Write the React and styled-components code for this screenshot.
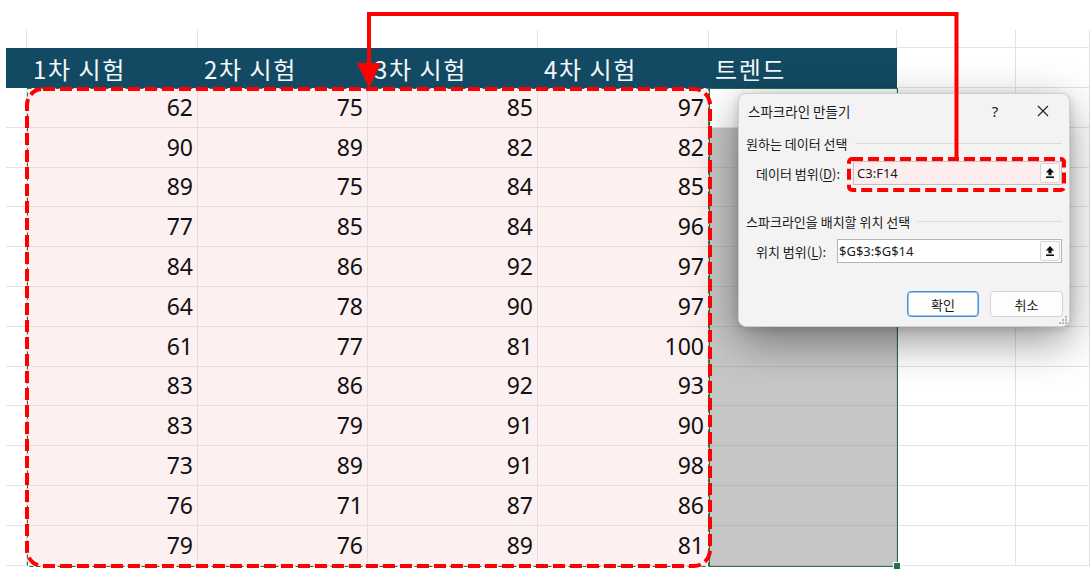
import React from 'react';
import styled, { createGlobalStyle } from 'styled-components';

const GlobalStyle = createGlobalStyle`
  html, body { margin: 0; padding: 0; background: #ffffff; }
  body { font-family: "Noto Sans", "Noto Sans CJK KR", sans-serif; }
  * { box-sizing: border-box; }
`;

const Stage = styled.div`
  position: relative;
  width: 1090px;
  height: 578px;
  overflow: hidden;
  background: #ffffff;
`;

const Sheet = styled.div`
  display: grid;
  grid-template-columns: 21px 171px 170px 170px 171px 188px 119px 74px;
  grid-template-rows: 18px 40px repeat(12, 39.8px);
  padding: 30px 0 0 6px;
`;

const TopCell = styled.div`
  border-right: 1px solid #e3e3e3;
  border-bottom: ${(p) => (p.$lined ? '1px solid #e3e3e3' : 'none')};
`;

const HeadCell = styled.div`
  display: flex;
  align-items: center;
  padding-left: 6px;
  background: ${(p) => (p.$band ? '#134a63' : '#ffffff')};
  border-right: ${(p) => (p.$band ? 'none' : '1px solid #e3e3e3')};
  border-bottom: ${(p) => (p.$band ? 'none' : '1px solid #e3e3e3')};
  color: #f4f7f9;
  font-family: "Noto Sans CJK KR", "Noto Sans", sans-serif;
  font-size: 24px;
  letter-spacing: 1.6px;
  white-space: nowrap;
`;

const tones = {
  white: { bg: '#ffffff', line: '#e3e3e3' },
  pink: { bg: '#fdf0f0', line: '#e6dcdc' },
  gray: { bg: '#c6c6c6', line: '#b7b7b7' },
  active: { bg: '#ffffff', line: '#e3e3e3' },
};

const DataCell = styled.div`
  display: flex;
  align-items: center;
  justify-content: flex-end;
  padding-right: 4px;
  background: ${(p) => tones[p.$tone].bg};
  border-right: 1px solid ${(p) => tones[p.$tone].line};
  border-bottom: 1px solid ${(p) => tones[p.$tone].line};
  color: #111111;
  font-family: "Noto Sans", sans-serif;
  font-size: 23px;
  line-height: 1;
`;

const Selection = styled.div`
  position: absolute;
  left: 709px;
  top: 88px;
  width: 189px;
  height: 479px;
  border: 1.5px solid #217346;
  pointer-events: none;
  &::after {
    content: '';
    position: absolute;
    right: -4px;
    bottom: -4px;
    width: 6px;
    height: 6px;
    background: #217346;
    border: 1px solid #ffffff;
  }
`;

const Marks = styled.svg`
  position: absolute;
  left: 0;
  top: 0;
  pointer-events: none;
`;

const Dialog = styled.div`
  position: absolute;
  left: 738px;
  top: 93px;
  width: 332px;
  height: 234px;
  background: #f3f3f3;
  border: 1px solid #cfcfcf;
  border-radius: 8px;
  box-shadow: 0 14px 44px rgba(0, 0, 0, 0.42), 0 2px 8px rgba(0, 0, 0, 0.14);
  font-family: "Noto Sans CJK KR", "Noto Sans", sans-serif;
  font-size: 13px;
  color: #1b1b1b;
  display: flex;
  flex-direction: column;
`;

const TitleBar = styled.div`
  height: 33px;
  display: flex;
  align-items: center;
  padding: 0 3px 0 9px;
  gap: 2px;
`;

const Title = styled.div`
  flex: 1;
  font-size: 13.5px;
`;

const TitleButton = styled.div`
  width: 46px;
  height: 30px;
  display: flex;
  align-items: center;
  justify-content: center;
  font-family: "Noto Sans", sans-serif;
  font-size: 15px;
  color: #222;
`;

const Section = styled.div`
  display: flex;
  align-items: center;
  gap: 7px;
  height: 18px;
  margin-top: ${(p) => p.$top}px;
  padding: 0 7px 0 7px;
  &::after {
    content: '';
    flex: 1;
    height: 1px;
    background: #dcdcdc;
  }
`;

const FieldRow = styled.div`
  display: flex;
  align-items: center;
  height: 24px;
  margin-top: 9px;
  padding: 0 7px 0 17px;
`;

const FieldLabel = styled.div`
  width: ${(p) => p.$w}px;
  flex: none;
  white-space: nowrap;
  u { text-underline-offset: 2px; }
`;

const RangeInput = styled.div`
  flex: 1;
  height: 24px;
  display: flex;
  align-items: center;
  padding-left: ${(p) => (p.$tint ? 3 : 1)}px;
  background: ${(p) => (p.$tint ? '#fdeeee' : '#ffffff')};
  border: 1px solid ${(p) => (p.$tint ? '#c9bcbc' : '#b4b4b4')};
  font-family: "Noto Sans", sans-serif;
  font-size: 13px;
  color: #1a1a1a;
`;

const InputText = styled.span`
  flex: 1;
`;

const CollapseButton = styled.div`
  width: 20px;
  height: 20px;
  margin-right: 1px;
  display: flex;
  align-items: center;
  justify-content: center;
  background: #fbfbfb;
  border: 1px solid #d6d6d6;
  border-radius: 2px;
`;

const ButtonRow = styled.div`
  display: flex;
  justify-content: flex-end;
  gap: 11px;
  margin-top: 28px;
  padding-right: 6px;
`;

const DialogButton = styled.div`
  width: ${(p) => p.$w}px;
  height: 26px;
  display: flex;
  align-items: center;
  justify-content: center;
  background: #fdfdfd;
  border: 1px solid ${(p) => (p.$primary ? '#4a8fd4' : '#d2d2d2')};
  box-shadow: ${(p) => (p.$primary ? 'inset 0 0 0 1px #9cc3ea' : 'none')};
  border-radius: 4px;
  font-size: 13px;
  color: #1b1b1b;
`;

const Grip = styled.svg`
  position: absolute;
  right: 2px;
  bottom: 2px;
`;

const rows = [
  [62, 75, 85, 97],
  [90, 89, 82, 82],
  [89, 75, 84, 85],
  [77, 85, 84, 96],
  [84, 86, 92, 97],
  [64, 78, 90, 97],
  [61, 77, 81, 100],
  [83, 86, 92, 93],
  [83, 79, 91, 90],
  [73, 89, 91, 98],
  [76, 71, 87, 86],
  [79, 76, 89, 81],
];

const headers = ['', '1차 시험', '2차 시험', '3차 시험', '4차 시험', '트렌드'];

const CollapseIcon = () => (
  <svg width="10" height="12" viewBox="0 0 10 12">
    <path d="M5 1 L9.2 5.4 H6.6 V8.2 H3.4 V5.4 H0.8 Z" fill="#111" />
    <rect x="1" y="9.4" width="8" height="1.6" fill="#111" />
  </svg>
);

export default function App() {
  return (
    <Stage>
      <GlobalStyle />
      <Sheet>
        {Array.from({ length: 8 }).map((_, i) => (
          <TopCell key={`t${i}`} $lined={i >= 6} />
        ))}
        {headers.map((h, i) => (
          <HeadCell key={`h${i}`} $band>
            {h}
          </HeadCell>
        ))}
        <HeadCell />
        <HeadCell />
        {rows.map((r, ri) => (
          <React.Fragment key={`r${ri}`}>
            <DataCell $tone="white" />
            {r.map((v, ci) => (
              <DataCell key={ci} $tone="pink">
                {v}
              </DataCell>
            ))}
            <DataCell $tone={ri === 0 ? 'active' : 'gray'} />
            <DataCell $tone="white" />
            <DataCell $tone="white" />
          </React.Fragment>
        ))}
      </Sheet>

      <Marks width="1090" height="578">
        <rect
          x="27.5"
          y="88.5"
          width="681"
          height="478"
          fill="none"
          stroke="#217346"
          strokeWidth="1"
          strokeDasharray="4 3"
        />
      </Marks>
      <Selection />

      <Dialog>
        <TitleBar>
          <Title>스파크라인 만들기</Title>
          <TitleButton>?</TitleButton>
          <TitleButton>
            <svg width="12" height="12" viewBox="0 0 12 12">
              <path d="M1 1 L11 11 M11 1 L1 11" stroke="#222" strokeWidth="1.1" />
            </svg>
          </TitleButton>
        </TitleBar>
        <Section $top={7}>원하는 데이터 선택</Section>
        <FieldRow>
          <FieldLabel $w={97}>
            데이터 범위(<u>D</u>):
          </FieldLabel>
          <RangeInput $tint>
            <InputText>C3:F14</InputText>
            <CollapseButton>
              <CollapseIcon />
            </CollapseButton>
          </RangeInput>
        </FieldRow>
        <Section $top={27}>스파크라인을 배치할 위치 선택</Section>
        <FieldRow>
          <FieldLabel $w={81}>
            위치 범위(<u>L</u>):
          </FieldLabel>
          <RangeInput>
            <InputText>$G$3:$G$14</InputText>
            <CollapseButton>
              <CollapseIcon />
            </CollapseButton>
          </RangeInput>
        </FieldRow>
        <ButtonRow>
          <DialogButton $primary $w={72}>
            확인
          </DialogButton>
          <DialogButton $w={73}>취소</DialogButton>
        </ButtonRow>
        <Grip width="8" height="8" viewBox="0 0 8 8">
          <g fill="#b5b5b5">
            <rect x="6" y="0" width="2" height="2" />
            <rect x="3" y="3" width="2" height="2" />
            <rect x="6" y="3" width="2" height="2" />
            <rect x="0" y="6" width="2" height="2" />
            <rect x="3" y="6" width="2" height="2" />
            <rect x="6" y="6" width="2" height="2" />
          </g>
        </Grip>
      </Dialog>

      <Marks width="1090" height="578">
        <rect
          x="27"
          y="89"
          width="683"
          height="477"
          rx="16"
          fill="none"
          stroke="#ff0000"
          strokeWidth="4"
          strokeDasharray="12 5"
        />
        <polyline
          points="956.5,157 956.5,14 369,14 369,66"
          fill="none"
          stroke="#ff0000"
          strokeWidth="4"
        />
        <polygon points="357,63 381,63 369,88" fill="#ff0000" />
        <rect
          x="849"
          y="159"
          width="215"
          height="31"
          rx="3"
          fill="none"
          stroke="#ff0000"
          strokeWidth="4"
          strokeDasharray="11 5"
        />
      </Marks>
    </Stage>
  );
}
